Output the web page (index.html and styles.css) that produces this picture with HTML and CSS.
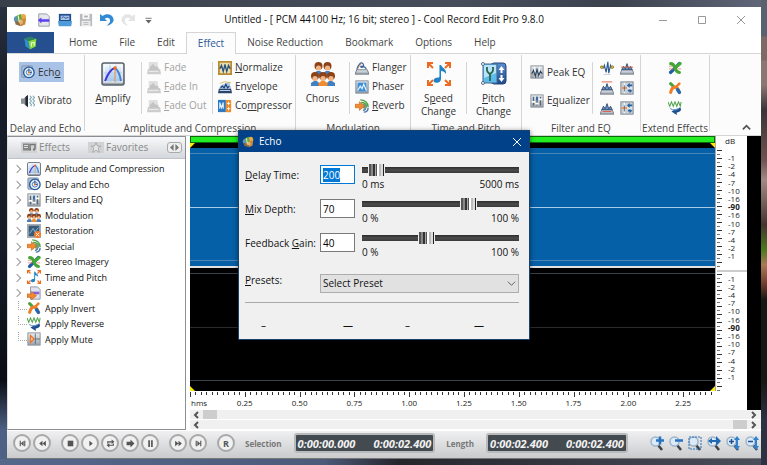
FILE: index.html
```html
<!DOCTYPE html>
<html lang="en">
<head>
<meta charset="utf-8">
<title>Untitled - Cool Record Edit Pro 9.8.0</title>
<link rel="stylesheet" href="styles.css">
</head>
<body>
<svg class="defs" aria-hidden="true">
  <defs>
    <linearGradient id="steel" x1="0" y1="0" x2="0" y2="1"><stop offset="0" stop-color="#e9edf2"/><stop offset="1" stop-color="#9aa3ad"/></linearGradient>
    <linearGradient id="sky" x1="0" y1="0" x2="0" y2="1"><stop offset="0" stop-color="#eef7ff"/><stop offset="1" stop-color="#9cc4ea"/></linearGradient>
    <linearGradient id="navy" x1="0" y1="0" x2="0" y2="1"><stop offset="0" stop-color="#5b8fd0"/><stop offset="1" stop-color="#1d4788"/></linearGradient>

    <symbol id="i-app" viewBox="0 0 16 16"><circle cx="11.500" cy="4.500" r="3.500" fill="#e9a944"/><circle cx="4.500" cy="7" r="3.500" fill="#5f93bd"/><path d="M4 3l5-2 2 10-5 1z" fill="#5ea845"/><path d="M9 7l6-1-1 7-5 2z" fill="#c9873b"/><path d="M2 9l6 1 1 5-6-2z" fill="#8c6b46"/><circle cx="9" cy="10" r="2.500" fill="#e2b477"/><path d="M6 3l1 7" stroke="#e6f2b8" stroke-width="1.300"/></symbol>
    <symbol id="i-cube" viewBox="0 0 20 20"><path d="M2 4l8-3 9 3-1 11-8 4-6-4z" fill="#3f9d38"/><path d="M2 4l6 3 2 12-6-4z" fill="#2b8fd0"/><path d="M8 7l11-3-1 11-8 4z" fill="#86d83c"/><path d="M2 4l8-3 9 3-11 3z" fill="#2d7f6a"/><path d="M12 15v-5l4-1v5" fill="none" stroke="#f5ffd8" stroke-width="1.500"/></symbol>
    <symbol id="i-new" viewBox="0 0 16 16"><path d="M2 1h9l3 3v11H2z" fill="#e4e7eb" stroke="#8f969e"/><path d="M1 8l4-3v2h9v3H5v2z" fill="#5b3ff0"/></symbol>
    <symbol id="i-open" viewBox="0 0 16 16"><path d="M1 1h14v13H1z" fill="#1f4f8e"/><path d="M3 3h10v5H3z" fill="#a9c3df"/><path d="M4 6l2-2 2 2 4-1" stroke="#2452b5" fill="none"/><path d="M0 9h16l-1 6H1z" fill="#4f9bd9"/></symbol>
    <symbol id="i-save" viewBox="0 0 16 16"><path d="M1 1h14v14H1z" fill="#b9bcbf"/><path d="M4 1h8v6H4z" fill="#f7f7f7"/><path d="M3 9h10v6H3z" fill="#ededed"/><path d="M5 11h6M5 13h6" stroke="#b0b3b6"/><path d="M6 4h4" stroke="#aaa" stroke-width="2"/></symbol>
    <symbol id="i-undo" viewBox="0 0 16 16"><path d="M0 1v8h8L5.500 6.500C8 4.500 12 5.500 11.500 9.500c-.5 2-2 3.500-4 5C12 14 16 10.500 15.500 7 14.500 1 7 0 3 3.500z" fill="#3289d6"/></symbol>
    <symbol id="i-redo" viewBox="0 0 16 16"><path d="M16 1v8H8l2.500-2.500C8 4.500 4 5.500 4.500 9.500c.5 2 2 3.500 4 5C4 14 0 10.500.5 7 1.500 1 9 0 13 3.500z" fill="#e3e5e7"/></symbol>
    <symbol id="i-echo" viewBox="0 0 16 16"><rect x="1" y="1" width="12" height="13" rx="1" fill="#aebfd3" stroke="#7b8ea6"/><circle cx="9" cy="8.500" r="6" fill="#e7f0fa" stroke="#24579b" stroke-width="1.500"/><circle cx="9" cy="8.500" r="3" fill="none" stroke="#3e78c0"/><path d="M9 8.500V4M9 8.500h3" stroke="#16386f"/><circle cx="9" cy="8.500" r="1.200" fill="#ed7b2b"/></symbol>
    <symbol id="i-vibrato" viewBox="0 0 16 16"><path d="M0 5h3l5-4v14l-5-4H0z" fill="#8b9198"/><path d="M5 3.500L8 1v14l-3-2.500z" fill="#24282d"/><path d="M10 2l2 2-2 2 2 2-2 2 2 2-1 2M13.500 2l2 2-2 2 2 2-2 2 2 2-1 2" fill="none" stroke="#76a4b3" stroke-width="1.200"/></symbol>
    <symbol id="i-amplify" viewBox="0 0 24 24"><rect x="1" y="1" width="22" height="22" rx="2" fill="url(#steel)" stroke="#59626c" stroke-width="1.500"/><rect x="3" y="3" width="18" height="17" fill="url(#sky)" stroke="#fff"/><path d="M3 11h18M9 3v17M15 3v17" stroke="#b3cde8"/><path d="M4 19C6 14 9 7 14 6" fill="none" stroke="#4330d8" stroke-width="2"/><path d="M14 6c3 2 5 7 6 13" fill="none" stroke="#477fd0" stroke-width="2"/><path d="M14 5v15" stroke="#e79042"/><circle cx="14" cy="6" r="1.700" fill="#f26a1b"/></symbol>
    <symbol id="i-fade" viewBox="0 0 16 16"><path d="M2 1h10l1 8H2z" fill="#e0e0e0"/><path d="M1 9h14l1 6H0z" fill="#cdcdcd"/><path d="M3 7l4-4 2 3 4 1v3H3z" fill="#c4c4c4"/><path d="M2 12h11" stroke="#eee"/></symbol>
    <symbol id="i-normalize" viewBox="0 0 16 16"><path d="M1 1h14v14H1z" fill="#e9ddb5" stroke="#b98d2b" stroke-width="2"/><path d="M2 9l2-4 2 7 2-8 2 8 2-7 2 4" fill="none" stroke="#2d5479" stroke-width="1.500"/></symbol>
    <symbol id="i-envelope" viewBox="0 0 16 16"><path d="M3 6L13 2l2 8H1z" fill="#a9c4e4"/><path d="M1 10h14l1 5H0z" fill="#26456d"/><path d="M3 9l2-2 2 2 2-4 2 4 2-2" fill="none" stroke="#173a78" stroke-width="1.300"/><path d="M2 4l5-2 8 1" stroke="#d9b34e" fill="none"/><path d="M2 12h12" stroke="#dbe5ef"/></symbol>
    <symbol id="i-compress" viewBox="0 0 16 16"><path d="M0 1h9v14H0z" fill="#2d79c3"/><path d="M2 11V4l2 6 2-6v7" fill="none" stroke="#e3f1fc" stroke-width="1.300"/><rect x="9" y="1" width="6" height="14" rx="1" fill="#f08a24"/><path d="M12 3v4M12 9v4M10 5h4M10 11h4" stroke="#fff"/></symbol>
    <symbol id="i-people" viewBox="0 0 24 24"><path d="M3 13v-2l3-2h3l3 2 3-2h3l3 2v2z" fill="#417fc3"/><g fill="#8e4218"><circle cx="7.500" cy="4" r="4"/><circle cx="16.500" cy="4" r="4"/></g><g fill="#f0b588"><circle cx="7.500" cy="6" r="2.600"/><circle cx="16.500" cy="6" r="2.600"/></g><path d="M0 24v-3l3-2h3l2 2v3zM16 24v-3l2-2h3l3 2v3z" fill="#417fc3"/><path d="M7.500 24v-3l3-2h3l3 2v3z" fill="#f08d2e"/><g fill="#8e4218"><circle cx="4" cy="14" r="4"/><circle cx="12" cy="14" r="4"/><circle cx="20" cy="14" r="4"/></g><g fill="#f0b588"><circle cx="4" cy="16.500" r="2.600"/><circle cx="12" cy="16.500" r="2.600"/><circle cx="20" cy="16.500" r="2.600"/></g></symbol>
    <symbol id="i-flanger" viewBox="0 0 16 16"><path d="M2 10C4 3 7 1 9 3s0 5-2 4 3-3 6 2" fill="none" stroke="#3e6799" stroke-width="1.400"/><path d="M0 15l2-5h12l2 5z" fill="url(#steel)" stroke="#69737e"/><path d="M3 9l4-6" stroke="#df8b56"/></symbol>
    <symbol id="i-phaser" viewBox="0 0 16 16"><rect x="1" y="1" width="14" height="14" fill="url(#steel)" stroke="#77818b"/><path d="M3 3h10v10H3z" fill="#3d8ed8"/><path d="M3 12l3-5 2 3 2-5 3 7" fill="none" stroke="#e4f4ff" stroke-width="1.400"/></symbol>
    <symbol id="i-reverb" viewBox="0 0 16 16"><g fill="none" stroke-width="1.600"><path d="M6 1c5 0 9 3 9 8M7 4c4 0 6 2 6 5" stroke="#4fa33d"/><path d="M15 10c0 3-2 5-5 5M12 10c0 2-1 3-3 3" stroke="#4e77a8"/></g><circle cx="11" cy="8" r="3" fill="#6fa07d"/><path d="M0 6h5V3l6 5-6 5v-3H0z" fill="#f38a2e" stroke="#bd5e12" stroke-width=".6"/></symbol>
    <symbol id="i-note" viewBox="0 0 24 24"><path d="M1 6V1h5M2 2l4 4M18 1h5v5M22 2l-4 4M1 18v5h5M2 22l4-4M18 23h5v-5M22 22l-4-4" fill="none" stroke="#ee6a1e" stroke-width="2"/><path d="M12 3h2c1 3 6 4 5 9-1-2-3-3-5-3v8c0 3-3 4.500-6 3.500-3-1.500-1-5.500 4-5z" fill="#2382c5"/><path d="M12.500 3v12" stroke="#75bfe9"/></symbol>
    <symbol id="i-pitch" viewBox="0 0 26 24"><rect x="10" y="1" width="15" height="21" rx="3" fill="url(#navy)" stroke="#23477b"/><path d="M2 2h14v19H2z" fill="#5bbcec" stroke="#46688e"/><path d="M3 3h12v8L3 16z" fill="#b8e3f8"/><path d="M6 5v3c0 3 3 3 3 5v6M12 5v3c0 3-3 3-3 5" fill="none" stroke="#28664b" stroke-width="1.800"/><path d="M20.500 4l3 4h-2v3h-2V8h-2zM20.500 20l3-4h-2v-3h-2v3h-2z" fill="#fff"/><g fill="#fff" stroke="#526a85"><circle cx="2" cy="2" r="1.500"/><circle cx="2" cy="21" r="1.500"/></g></symbol>
    <symbol id="i-peak" viewBox="0 0 16 16"><rect x="1" y="1" width="14" height="14" fill="url(#steel)" stroke="#858d95"/><path d="M2 7h12M5 2v12M11 2v12" stroke="#fff"/><path d="M2 10l2-4 2 7 2-8 2 7 2-5 2 3" fill="none" stroke="#28425f" stroke-width="1.300"/><path d="M2 11h3" stroke="#df8843"/></symbol>
    <symbol id="i-eq" viewBox="0 0 16 16"><rect x="1" y="1" width="14" height="14" fill="url(#steel)" stroke="#858d95"/><path d="M4 3v10M8 3v10M12 3v10" stroke="#58646f" stroke-width="1.500"/><path d="M2 9h4M6 11h4M10 6h4" stroke="#fff" stroke-width="2"/><path d="M8 3v4" stroke="#2c68b0" stroke-width="2"/></symbol>
    <symbol id="i-wave" viewBox="0 0 16 16"><path d="M3 8h1l1-3 2 8 2-12 1 13 2-9 1 3" fill="none" stroke="#2b5992" stroke-width="1.300"/><circle cx="2" cy="7" r="1.500" fill="#e6bc3f" stroke="#8f7623"/><circle cx="14" cy="7" r="1.500" fill="#e6bc3f" stroke="#8f7623"/><path d="M4 15.500h8" stroke="#bdc7d0"/></symbol>
    <symbol id="i-pass" viewBox="0 0 16 16"><path d="M2 10h12l2 5H0z" fill="url(#steel)" stroke="#737c86"/><path d="M2 10l2-4 2 3 2-6 2 6 2-3 2 4z" fill="#7194c0" stroke="#24446f"/></symbol>
    <symbol id="i-mix" viewBox="0 0 16 16"><rect x="1" y="1" width="14" height="14" fill="#cbd0d6" stroke="#737b85"/><path d="M2 8h12M5 2v12" stroke="#fff"/><path d="M2 8h6" stroke="#e68c52" stroke-width="2"/><path d="M5 5v7" stroke="#546575"/><path d="M8 5l3-3v2h3v2h-3v2zM14 11l-3-2v1H9v2h2v2z" fill="#2563a7"/></symbol>
    <symbol id="i-stereo" viewBox="0 0 16 16"><path d="M3 13L13 3" stroke="#235ca5" stroke-width="4" stroke-linecap="round"/><path d="M3 3c3 0 4 2 5 5s2 5 5 5" fill="none" stroke="#43a634" stroke-width="3.500" stroke-linecap="round"/><path d="M10 6l4-3" stroke="#49ab38" stroke-width="3.500" stroke-linecap="round"/><path d="M1 6h4M11 9h4M1 9h5" stroke="#ef9277"/></symbol>
    <symbol id="i-invert" viewBox="0 0 16 16"><path d="M3 3c1 1 2 2 3 3" stroke="#49a13a" stroke-width="3.500" stroke-linecap="round"/><path d="M3 13c1-4 3-6 5-6 3 0 4 3 5 6" fill="none" stroke="#ef7e27" stroke-width="3.500" stroke-linecap="round"/><path d="M9 7l4-4" stroke="#ef7e27" stroke-width="3" stroke-linecap="round"/><path d="M11 10l2 3" stroke="#286ab0" stroke-width="4" stroke-linecap="round"/></symbol>
    <symbol id="i-reverse" viewBox="0 0 16 16"><path d="M0 1l2 5 2-5 2 5 2-5 2 5 2-5 2 5 1-5" fill="none" stroke="#55a550" stroke-width="1.200"/><path d="M2 8c4 2 7 2 12-1l1 3c-1 2-3 3-5 3v3l-6-4 3-2c-2 0-4 0-5-2z" fill="#1e508f"/><path d="M3 9c4 2 7 1 10-1" stroke="#86b6e3" fill="none"/></symbol>
    <symbol id="i-restore" viewBox="0 0 16 16"><rect x="1" y="1" width="14" height="14" fill="#395b79" stroke="#a5adb5" stroke-width="2"/><path d="M3 11l4-6 2 4 4-5" stroke="#8dc4e8" fill="none"/><circle cx="12" cy="12" r="4" fill="#f37a26"/><path d="M10 10l4 4M14 10l-4 4" stroke="#fff"/></symbol>
    <symbol id="i-generate" viewBox="0 0 16 16"><path d="M4 1h8l3 3v11H4z" fill="#dfe3ee" stroke="#8990a0"/><path d="M6 8h8" stroke="#8a61da" stroke-width="3"/><path d="M0 9h5V6l6 5-6 5v-3H0z" fill="#f38a2e" stroke="#b75d18" stroke-width=".6"/></symbol>
    <symbol id="i-mute" viewBox="0 0 16 16"><rect x="1" y="1" width="14" height="14" fill="url(#steel)" stroke="#858d95"/><path d="M4 4l4 4-4 4z" fill="#f8d2b8" stroke="#ee7428" stroke-width="1.500"/><path d="M9.500 2v12M9 8h6" stroke="#5e6872"/></symbol>
    <symbol id="i-tabfx" viewBox="0 0 16 10"><path d="M2 1h6v7H2z" fill="#858585"/><path d="M3 3h4M3 5h4" stroke="#ddd"/><path d="M9 7V2h5v5" stroke="#777" stroke-width="1.500" fill="none"/><path d="M8 7h2M12 7h2" stroke="#777" stroke-width="2"/></symbol>
    <symbol id="i-star" viewBox="0 0 16 16"><path d="M8 1l2 5h5l-4 3 2 6-5-3-5 3 2-6-4-3h5z" fill="#e7e7e7" stroke="#999"/></symbol>

    <symbol id="g-first" viewBox="0 0 16 16"><path d="M3 3h2v10H3zM10 3v10L5 8zM11 3h2v10h-2z"/></symbol>
    <symbol id="g-rew" viewBox="0 0 16 16"><path d="M8 3v10L2 8zM14 3v10L8 8z"/></symbol>
    <symbol id="g-stop" viewBox="0 0 16 16"><path d="M3 3h10v10H3z"/></symbol>
    <symbol id="g-play" viewBox="0 0 16 16"><path d="M6 3v10l6-5z"/></symbol>
    <symbol id="g-loop" viewBox="0 0 16 16"><path d="M2 8V4h8V1l5 4-5 4V6H4v2zM14 8v4H6v3l-5-4 5-4v3h6V8z"/></symbol>
    <symbol id="g-next" viewBox="0 0 16 16"><path d="M1 5h7V1l7 7-7 7v-4H1z"/></symbol>
    <symbol id="g-pause" viewBox="0 0 16 16"><path d="M4 2h3v12H4zM9 2h3v12H9z"/></symbol>
    <symbol id="g-fwd" viewBox="0 0 16 16"><path d="M2 3v10l6-5zM8 3v10l6-5z"/></symbol>
    <symbol id="g-last" viewBox="0 0 16 16"><path d="M3 3h2v10H3zM6 3v10l5-5zM11 3h2v10h-2z"/></symbol>

    <symbol id="z-lens" viewBox="0 0 16 16"><path d="M9 10l4 5" stroke="#3e4247" stroke-width="2.500"/><circle cx="6.500" cy="6.500" r="4.500" fill="#dcebf7" stroke="#9db4c9" stroke-width="1.500"/></symbol>
    <symbol id="z-in" viewBox="0 0 16 16"><use href="#z-lens"/><path d="M7 5.500h8M11 1.500v8" stroke="#2673c1" stroke-width="2.500"/></symbol>
    <symbol id="z-out" viewBox="0 0 16 16"><use href="#z-lens"/><path d="M7 5.500h8" stroke="#2673c1" stroke-width="2.500"/></symbol>
    <symbol id="z-sel" viewBox="0 0 16 16"><use href="#z-lens"/><path d="M2 2h12v12H2z" fill="none" stroke="#2e6fb5" stroke-dasharray="2 1"/></symbol>
    <symbol id="z-fit" viewBox="0 0 16 16"><use href="#z-lens"/><path d="M2 6l4-3v2h4V1l5 5-5 5V7H6v2z" fill="#2168b3"/></symbol>
    <symbol id="z-vin" viewBox="0 0 16 16"><use href="#z-lens"/><path d="M4 6.500h5M6.500 4v5" stroke="#1c4f93" stroke-width="1.500"/><path d="M12 1l3 4h-2v6h2l-3 4-3-4h2V5H9z" fill="#2d82d0"/></symbol>
    <symbol id="z-vout" viewBox="0 0 16 16"><use href="#z-lens"/><path d="M4 6.500h5" stroke="#1c4f93" stroke-width="1.500"/><path d="M12 1l3 4h-2v6h2l-3 4-3-4h2V5H9z" fill="#2d82d0"/></symbol>
  </defs>
</svg>

<div class="window">
  <header class="titlebar">
    <div class="quick">
      <svg><use href="#i-app"/></svg>
      <button aria-label="New"><svg><use href="#i-new"/></svg></button>
      <button aria-label="Open"><svg><use href="#i-open"/></svg></button>
      <button aria-label="Save"><svg><use href="#i-save"/></svg></button>
      <button aria-label="Undo"><svg><use href="#i-undo"/></svg></button>
      <button aria-label="Redo"><svg><use href="#i-redo"/></svg></button>
      <button aria-label="Customize"><svg viewBox="0 0 16 16"><path d="M4 6h7" stroke="#666"/><path d="M4 8h7l-3.500 4z" fill="#666"/></svg></button>
    </div>
    <h1>Untitled - [ PCM 44100 Hz; 16 bit; stereo ] - Cool Record Edit Pro 9.8.0</h1>
    <div class="syscmds">
      <button aria-label="Minimize"><svg viewBox="0 0 10 10"><path d="M1 5.500h8"/></svg></button>
      <button aria-label="Maximize"><svg viewBox="0 0 10 10"><path d="M1.500 1.500h7v7h-7z"/></svg></button>
      <button aria-label="Close"><svg viewBox="0 0 10 10"><path d="M1 1l8 8M9 1L1 9"/></svg></button>
    </div>
  </header>

  <nav class="tabs">
    <button class="tab tab-app" aria-label="Application menu"><svg><use href="#i-cube"/></svg></button>
    <button class="tab">Home</button>
    <button class="tab">File</button>
    <button class="tab">Edit</button>
    <button class="tab tab-active">Effect</button>
    <button class="tab">Noise Reduction</button>
    <button class="tab">Bookmark</button>
    <button class="tab">Options</button>
    <button class="tab">Help</button>
  </nav>

  <section class="ribbon">
    <div class="group group-delay">
      <div class="tools">
        <div class="stack stack-two">
          <button class="cmd cmd-on"><svg><use href="#i-echo"/></svg><span>Ech<u>o</u></span></button>
          <button class="cmd"><svg><use href="#i-vibrato"/></svg><span>Vibrato</span></button>
        </div>
      </div>
      <h2>Delay and Echo</h2>
    </div>
    <div class="group group-amp">
      <div class="tools">
        <button class="big"><svg><use href="#i-amplify"/></svg><span><u>A</u>mplify</span></button>
        <div class="stack ruled off">
          <button class="cmd" disabled><svg><use href="#i-fade"/></svg><span>Fade</span></button>
          <button class="cmd" disabled><svg><use href="#i-fade"/></svg><span><u>F</u>ade In</span></button>
          <button class="cmd" disabled><svg><use href="#i-fade"/></svg><span><u>F</u>ade Out</span></button>
        </div>
        <div class="stack ruled">
          <button class="cmd"><svg><use href="#i-normalize"/></svg><span><u>N</u>ormalize</span></button>
          <button class="cmd"><svg><use href="#i-envelope"/></svg><span>En<u>v</u>elope</span></button>
          <button class="cmd"><svg><use href="#i-compress"/></svg><span>Co<u>m</u>pressor</span></button>
        </div>
      </div>
      <h2>Amplitude and Compression</h2>
    </div>
    <div class="group group-mod">
      <div class="tools">
        <button class="big"><svg><use href="#i-people"/></svg><span>Chorus</span></button>
        <div class="stack ruled">
          <button class="cmd"><svg><use href="#i-flanger"/></svg><span>Flanger</span></button>
          <button class="cmd"><svg><use href="#i-phaser"/></svg><span>Phaser</span></button>
          <button class="cmd"><svg><use href="#i-reverb"/></svg><span><u>R</u>everb</span></button>
        </div>
      </div>
      <h2>Modulation</h2>
    </div>
    <div class="group group-time">
      <div class="tools">
        <button class="big"><svg><use href="#i-note"/></svg><span>S<u>p</u>eed<br>Change</span></button>
        <button class="big ruled"><svg><use href="#i-pitch"/></svg><span><u>P</u>itch<br>Change</span></button>
      </div>
      <h2>Time and Pitch</h2>
    </div>
    <div class="group group-filter">
      <div class="tools">
        <div class="stack stack-two">
          <button class="cmd"><svg><use href="#i-peak"/></svg><span>Peak EQ</span></button>
          <button class="cmd"><svg><use href="#i-eq"/></svg><span>E<u>q</u>ualizer</span></button>
        </div>
        <div class="icons ruled">
          <button aria-label="Band pass"><svg><use href="#i-wave"/></svg></button>
          <button aria-label="High shelf"><svg viewBox="0 0 16 16"><use href="#i-pass"/><path d="M1 7h14" stroke="#e05a3c"/></svg></button>
          <button aria-label="High pass"><svg viewBox="0 0 16 16"><use href="#i-pass"/><path d="M2 1h12" stroke="#e05a3c"/></svg></button>
          <button aria-label="Low shelf"><svg><use href="#i-mix"/></svg></button>
          <button aria-label="Low pass"><svg viewBox="0 0 16 16"><use href="#i-pass"/><path d="M3 12h10" stroke="#e05a3c"/></svg></button>
          <button aria-label="Notch"><svg><use href="#i-mix"/></svg></button>
        </div>
      </div>
      <h2>Filter and EQ</h2>
    </div>
    <div class="group group-extend">
      <div class="tools">
        <div class="icons icons-one">
          <button aria-label="Stereo imagery"><svg><use href="#i-stereo"/></svg></button>
          <button aria-label="Invert"><svg><use href="#i-invert"/></svg></button>
          <button aria-label="Reverse"><svg><use href="#i-reverse"/></svg></button>
        </div>
      </div>
      <h2>Extend Effects</h2>
    </div>
    <button class="collapse" aria-label="Collapse ribbon"><svg viewBox="0 0 10 10"><path d="M1 7l4-4 4 4"/></svg></button>
  </section>

  <main class="work">
    <aside class="panel">
      <div class="panel-tabs">
        <button><svg><use href="#i-tabfx"/></svg>Effects</button>
        <button><svg><use href="#i-star"/></svg>Favorites</button>
        <button class="pager" aria-label="Scroll tabs"><svg viewBox="0 0 14 10"><path d="M6 1v8L2 5zM8 1v8l4-4z"/></svg></button>
      </div>
      <ul class="tree">
        <li class="branch"><svg><use href="#i-amplify"/></svg>Amplitude and Compression</li>
        <li class="branch"><svg><use href="#i-echo"/></svg>Delay and Echo</li>
        <li class="branch"><svg><use href="#i-eq"/></svg>Filters and EQ</li>
        <li class="branch"><svg><use href="#i-people"/></svg>Modulation</li>
        <li class="branch"><svg><use href="#i-restore"/></svg>Restoration</li>
        <li class="branch"><svg><use href="#i-reverb"/></svg>Special</li>
        <li class="branch"><svg><use href="#i-stereo"/></svg>Stereo Imagery</li>
        <li class="branch"><svg><use href="#i-note"/></svg>Time and Pitch</li>
        <li class="branch"><svg><use href="#i-generate"/></svg>Generate</li>
        <li><svg><use href="#i-invert"/></svg>Apply Invert</li>
        <li><svg><use href="#i-reverse"/></svg>Apply Reverse</li>
        <li><svg><use href="#i-mute"/></svg>Apply Mute</li>
      </ul>
    </aside>

    <section class="editor">
      <div class="stage">
        <div class="waves">
          <div class="overview"></div>
          <div class="marks marks-top"><i></i><i></i></div>
          <div class="channel channel-left"><hr><hr><hr></div>
          <div class="channel channel-right"><hr><hr><hr></div>
          <div class="marks marks-bottom"><i></i><i></i></div>
        </div>
        <div class="scale">
          <span class="unit">dB</span>
          <div class="levels"><span>-1</span><span>-2</span><span>-4</span><span>-7</span><span>-10</span><span>-16</span><b>-90</b><span>-16</span><span>-10</span><span>-7</span><span>-4</span><span>-2</span><span>-1</span></div>
          <div class="levels"><span>-1</span><span>-2</span><span>-4</span><span>-7</span><span>-10</span><span>-16</span><b>-90</b><span>-16</span><span>-10</span><span>-7</span><span>-4</span><span>-2</span><span>-1</span></div>
        </div>
        <div class="ruler">
          <span class="hms">hms</span><span>0.25</span><span>0.50</span><span>0.75</span><span>1.00</span><span>1.25</span><span>1.50</span><span>1.75</span><span>2.00</span><span>2.25</span>
        </div>
        <div class="meter"></div>
      </div>
      <div class="scroll">
        <svg viewBox="0 0 8 8"><path d="M6 1L3 4l3 3"/></svg><i></i><svg class="end" viewBox="0 0 8 8"><path d="M2 1l3 3-3 3"/></svg>
      </div>
      <div class="scroll">
        <svg viewBox="0 0 8 8"><path d="M6 1L3 4l3 3"/></svg><i class="end"></i><svg viewBox="0 0 8 8"><path d="M2 1l3 3-3 3"/></svg>
      </div>
    </section>
  </main>

  <footer class="transport">
    <div class="keys">
      <button aria-label="Go to start"><svg><use href="#g-first"/></svg></button>
      <button aria-label="Rewind"><svg><use href="#g-rew"/></svg></button>
    </div>
    <div class="keys">
      <button aria-label="Stop"><svg><use href="#g-stop"/></svg></button>
      <button aria-label="Play"><svg><use href="#g-play"/></svg></button>
      <button aria-label="Loop"><svg><use href="#g-loop"/></svg></button>
      <button aria-label="Play to end"><svg><use href="#g-next"/></svg></button>
      <button aria-label="Pause"><svg><use href="#g-pause"/></svg></button>
    </div>
    <div class="keys">
      <button aria-label="Fast forward"><svg><use href="#g-fwd"/></svg></button>
      <button aria-label="Go to end"><svg><use href="#g-last"/></svg></button>
    </div>
    <div class="keys"><button aria-label="Record">R</button></div>
    <div class="readout"><span>Selection</span><output><em>0:00:00.000</em><em>0:00:02.400</em></output></div>
    <div class="readout"><span>Length</span><output><em>0:00:02.400</em><em>0:00:02.400</em></output></div>
    <div class="zooms">
      <button aria-label="Zoom in"><svg><use href="#z-in"/></svg></button>
      <button aria-label="Zoom out"><svg><use href="#z-out"/></svg></button>
      <button aria-label="Zoom to selection"><svg><use href="#z-sel"/></svg></button>
      <button aria-label="Zoom full"><svg><use href="#z-fit"/></svg></button>
      <button aria-label="Zoom in vertically"><svg><use href="#z-vin"/></svg></button>
      <button aria-label="Zoom out vertically"><svg><use href="#z-vout"/></svg></button>
    </div>
  </footer>

  <form class="dialog" role="dialog" aria-labelledby="dlg-title">
    <header>
      <svg><use href="#i-app"/></svg>
      <h2 id="dlg-title">Echo</h2>
      <button type="button" aria-label="Close dialog"><svg viewBox="0 0 10 10"><path d="M1 1l8 8M9 1L1 9"/></svg></button>
    </header>
    <div class="fields">
      <div class="field">
        <label for="delay"><u>D</u>elay Time:</label>
        <input id="delay" type="text" value="200">
        <div class="slide">
          <input type="range" min="0" max="5000" value="200" aria-label="Delay time">
          <span>0 ms</span><span>5000 ms</span>
        </div>
      </div>
      <div class="field">
        <label for="mix"><u>M</u>ix Depth:</label>
        <input id="mix" type="text" value="70">
        <div class="slide">
          <input type="range" min="0" max="100" value="70" aria-label="Mix depth">
          <span>0 %</span><span>100 %</span>
        </div>
      </div>
      <div class="field">
        <label for="gain">Feedback <u>G</u>ain:</label>
        <input id="gain" type="text" value="40">
        <div class="slide">
          <input type="range" min="0" max="100" value="40" aria-label="Feedback gain">
          <span>0 %</span><span>100 %</span>
        </div>
      </div>
      <div class="field field-preset">
        <label for="preset"><u>P</u>resets:</label>
        <div class="picker">
          <select id="preset"><option>Select Preset</option></select>
          <svg viewBox="0 0 10 10"><path d="M1 3l4 4 4-4"/></svg>
        </div>
      </div>
    </div>
    <div class="actions"><span>–</span><span>—</span><span>–</span><span>—</span></div>
  </form>
</div>
<script src="app.js"></script>
</body>
</html>
```
FILE: styles.css
```css
* { box-sizing: border-box; }

body {
  margin: 0;
  min-height: 100vh;
  padding: 7px 6px 6px 7px;
  font: 10px/13px "Open Sans", "Noto Sans", sans-serif;
  color: #222;
  background:
    linear-gradient(#5a6270 0 36px, #7d6a66 37px 60px, #8a7672 61px 85px, #3a3438 110px, #6e5350 160px, #a08b84 180px, #44352f 225px, #4c7a1d 250px, #a87a57 265px, #6b3a2c 285px, #141714 300px 380px, #2c3242 420px) right / 6px 100% no-repeat,
    linear-gradient(90deg, #394049, #484d5c 60%, #3c414e 80%, #62677a) top / 100% 7px no-repeat,
    linear-gradient(90deg, #54688c, #4d5b7a 42%, #25262c 52%, #4b4f5c) bottom / 100% 6px no-repeat,
    linear-gradient(#2c3340, #161c28 90px 250px, #0a0d14 380px, #4d6184 430px);
}

button {
  border: 0;
  padding: 0;
  background: none;
  font: inherit;
  color: inherit;
}

h1, h2, ul, hr { margin: 0; padding: 0; border: 0; font: inherit; }
svg { display: block; width: 14px; height: 14px; flex: none; }
u { text-underline-offset: 1px; }
.defs { position: absolute; width: 0; height: 0; }

.window {
  position: relative;
  display: flex;
  flex-direction: column;
  min-height: calc(100vh - 13px);
  background: #fff;
}

/* Title bar */
.titlebar {
  display: grid;
  grid-template-columns: 1fr auto 1fr;
  align-items: center;
  height: 25px;
}
.titlebar h1 { color: #111; white-space: nowrap; }
.quick { display: flex; gap: 7px; padding-left: 6px; }
.quick > svg { margin-right: 3px; }
.syscmds { display: flex; justify-content: flex-end; gap: 29px; padding-right: 15px; }
.syscmds svg { width: 10px; height: 10px; fill: none; stroke: #999; }

/* Ribbon tabs */
.tabs { display: flex; height: 22px; border-bottom: 1px solid #d5d5d5; }
.tab { padding: 0 11px; color: #444; white-space: nowrap; }
.tab-app { width: 47px; margin-right: 4px; padding: 0 16px; background: #254f8f; }
.tab-active {
  margin-bottom: -1px;
  border: 1px solid #d5d5d5;
  border-bottom: 0;
  background: #fcfcfc;
  color: #2b579a;
}

/* Ribbon */
.ribbon {
  display: flex;
  height: 82px;
  padding-top: 1px;
  border-bottom: 1px solid #d5d5d5;
  background: #fcfcfc;
}
.group {
  display: flex;
  flex-direction: column;
  height: 76px;
  border-right: 1px solid #d5d5d5;
}
.group h2 { margin-top: auto; margin-bottom: -4px; text-align: center; white-space: nowrap; color: #444; }
.group-delay { width: 78px; }
.group-amp { width: 211px; }
.group-mod { width: 115px; }
.group-time { width: 111px; }
.group-filter { width: 119px; }
.group-extend { width: 69px; }
.tools { display: flex; height: 60px; padding-top: 3px; }
.stack { display: flex; flex-direction: column; flex: 1; padding-left: 6px; }
.stack .cmd { flex: 1; }
.stack-two { justify-content: space-around; }
.group-delay .stack { padding-left: 12px; }
.group-filter .stack { flex: none; width: 70px; }
.stack-two .cmd { flex: none; }
.off { flex: none; width: 71px; }
.ruled { position: relative; }
.ruled::before {
  content: "";
  position: absolute;
  left: 0;
  top: 4px;
  bottom: 1px;
  border-left: 1px solid #d5d5d5;
}
.cmd { display: flex; align-items: center; gap: 3px; height: 20px; white-space: nowrap; color: #333; }
.cmd:disabled { color: #a3a3a3; }
.stack-two .cmd { width: 45px; padding-left: 2px; }
.cmd-on { background: #a9c2e8; }
.big {
  display: flex;
  flex-direction: column;
  align-items: center;
  gap: 6px;
  width: 56px;
  padding-top: 4px;
  color: #333;
}
.big svg { width: 26px; height: 24px; }
.group-mod .big { width: 53px; }
.group-time .big { flex: 1; }
.icons {
  display: grid;
  grid-template-columns: 14px 14px;
  grid-auto-rows: 20px;
  gap: 0 6px;
  align-items: center;
  padding-left: 8px;
}
.icons-one { grid-template-columns: 14px; padding: 0; margin: 0 auto; }
.collapse { margin: auto 10px 3px auto; }
.collapse svg { width: 9px; height: 9px; fill: none; stroke: #555; stroke-width: 2; }

/* Work area */
.work { display: flex; flex: 1; border-bottom: 1px solid #fff; }
.panel {
  width: 179px;
  border: 1px solid #8b8f93;
  border-left-color: #ddd;
  background: #fff;
}
.panel-tabs {
  display: flex;
  align-items: center;
  gap: 18px;
  height: 22px;
  padding: 0 3px 0 13px;
  border-bottom: 1px solid #bfc3c7;
  background: linear-gradient(#f7f8f9, #d4d7db);
  color: #888;
}
.panel-tabs button { display: flex; align-items: center; gap: 2px; }
.panel-tabs svg { width: 16px; height: 11px; background: #d0d2d4; }
.panel-tabs .pager { margin-left: auto; }
.panel-tabs .pager svg { width: 15px; height: 11px; border: 1px solid #aaa; border-radius: 3px; background: #eee; fill: #777; }
.tree {
  display: grid;
  grid-auto-rows: 1fr;
  height: 188px;
  list-style: none;
  padding: 2px 0 0 10px;
  font-size: 9px;
  font-weight: 500;
  color: #111;
}
.tree li {
  position: relative;
  display: flex;
  align-items: center;
  gap: 4px;
  padding-left: 9px;
  white-space: nowrap;
}
.tree li::before {
  content: "";
  position: absolute;
  left: 0;
  top: 0;
  width: 8px;
  height: 8px;
  border: dotted #aaa;
  border-width: 0 0 1px 1px;
}
.tree .branch::before {
  top: 5px;
  left: -4px;
  width: 5px;
  height: 5px;
  border: solid #999;
  border-width: 1px 1px 0 0;
  transform: rotate(45deg);
}

/* Waveform editor */
.editor { flex: 1; display: flex; flex-direction: column; padding-left: 4px; background: #fff; min-width: 0; }
.stage {
  flex: 1;
  display: grid;
  grid-template-columns: 1fr 31px 14px;
  grid-template-rows: 1fr 19px;
}
.waves { display: flex; flex-direction: column; border-right: 1px solid #aaa; background: #000; }
.overview { height: 7px; border: 1px solid #0a6a0a; background: #22ee22; }
.marks { display: flex; justify-content: space-between; height: 5px; }
.marks i { width: 5px; height: 5px; background: #ffec00; clip-path: polygon(0 0, 100% 0, 0 100%); }
.marks i + i { clip-path: polygon(0 0, 100% 0, 100% 100%); }
.marks-bottom i { clip-path: polygon(0 0, 100% 100%, 0 100%); }
.marks-bottom i + i { clip-path: polygon(100% 0, 100% 100%, 0 100%); }
.channel {
  flex: 1;
  display: flex;
  flex-direction: column;
  justify-content: space-between;
  padding: 5px 0;
}
.channel hr { height: 1px; background: #39424d; }
.channel hr:nth-child(2) { background: #2a2a2a; }
.channel-left { background: #0560a8; border-bottom: 2px solid #e2e2e2; }
.channel-left hr { background: #4a86b5; }
.channel-left hr:nth-child(2) { background: #a6cbe6; }
.scale {
  display: flex;
  flex-direction: column;
  padding-left: 1px;
  font-size: 8px;
  line-height: 8px;
}
.unit { height: 12px; padding: 1px 0 0 8px; }
.levels {
  flex: 1;
  display: flex;
  flex-direction: column;
  justify-content: space-between;
  padding: 6px 0 9px 11px;
  background:
    repeating-linear-gradient(#333 0 1px, transparent 1px 8px) 0 2px / 5px 100% no-repeat,
    repeating-linear-gradient(#777 0 1px, transparent 1px 4px) 0 2px / 3px 100% no-repeat;
}
.levels + .levels { padding: 3px 0 10px 11px; border-top: 2px solid #ccc; }
.levels > * { height: 8px; }
.meter { grid-column: 3; grid-row: 1 / 3; background: #000; }
.ruler {
  grid-column: 1;
  display: grid;
  grid-template-columns: 1fr repeat(9, 2fr) 0.2fr;
  padding-top: 6px;
  font-size: 8px;
  line-height: 12px;
  text-align: center;
  background:
    repeating-linear-gradient(90deg, #333 0 1px, transparent 1px 10.4167%) 0 1px / 100% 5px no-repeat,
    repeating-linear-gradient(90deg, #333 0 1px, transparent 1px 1.04167%) 0 1px / 100% 3px no-repeat;
}
.ruler .hms { text-align: left; padding-left: 1px; }
.scroll { display: flex; align-items: center; gap: 3px; height: 9px; margin-bottom: 1px; padding: 0 3px 0 2px; background: #f0f0f0; }
.scroll svg { width: 8px; height: 8px; fill: none; stroke: #555; stroke-width: 2; }
.scroll i { width: 14px; height: 9px; background: #cdcdcd; }
.scroll .end { margin-left: auto; }

/* Transport bar */
.transport {
  display: flex;
  align-items: center;
  height: 28px;
  padding: 0 1px 3px 6px;
  border-bottom: 1px solid #777;
  background: linear-gradient(#f0f0f1, #c9cbcd);
}
.keys { display: flex; gap: 2px; margin-right: 10px; }
.keys button {
  display: grid;
  place-items: center;
  width: 18px;
  height: 18px;
  border: 2px solid #a8a8a8;
  border-radius: 50%;
  background: #f1f1f1;
  font-size: 9px;
  line-height: 9px;
  font-weight: bold;
  color: #555;
}
.keys svg { width: 9px; height: 9px; fill: #555; }
.readout { display: flex; align-items: center; gap: 12px; margin-right: 11px; font-size: 8px; font-weight: bold; color: #777; }
.readout output {
  display: flex;
  align-items: center;
  gap: 18px;
  height: 20px;
  padding: 0 2px;
  border: 2px solid #b8babc;
  border-radius: 3px;
  background: #444b50;
  color: #f2f2f2;
  font-size: 11px;
}
.zooms { display: flex; gap: 3px; margin-left: auto; }
.zooms svg { width: 16px; height: 16px; }

/* Echo dialog */
.dialog {
  position: absolute;
  left: 231px;
  top: 123px;
  width: 292px;
  border: 1px solid #17406f;
  background: #f0f0f0;
  box-shadow: 0 1px 5px rgba(0, 0, 0, 0.5);
  color: #111;
}
.dialog header {
  display: flex;
  align-items: center;
  gap: 5px;
  height: 21px;
  padding: 0 7px 0 3px;
  background: #00418a;
  color: #fff;
}
.dialog header svg { width: 12px; height: 12px; }
.dialog header button { margin-left: auto; }
.dialog header button svg { width: 10px; height: 10px; stroke: #fff; }
.fields { margin: 0 10px 0 6px; padding-top: 12px; border-bottom: 1px solid #aaa; }
.field {
  display: grid;
  grid-template-columns: 75px 35px 1fr;
  height: 34px;
  align-items: start;
}
.field label { line-height: 22px; white-space: nowrap; }
.field input[type="text"] {
  width: 35px;
  height: 19px;
  margin-top: 1px;
  padding: 0 2px;
  border: 1px solid #7a7a7a;
  background: #fff;
  font: inherit;
  outline: 0;
}
.field input[type="text"]:focus { border-color: #0078d7; }
.field input::selection { background: #0078d7; color: #fff; }
.slide { display: grid; grid-template-columns: 1fr auto; margin-left: 7px; }
.slide input {
  grid-column: 1 / 3;
  appearance: none;
  width: 100%;
  height: 12px;
  margin: 0 0 2px;
  border-radius: 2px;
  background: linear-gradient(#2c2c2c, #4c4c4c, #3a3a3a) center / 100% 6px no-repeat;
}
.slide input::-webkit-slider-thumb {
  appearance: none;
  width: 17px;
  height: 12px;
  background: linear-gradient(90deg, #eee 0 1px, #555 1px 3px, #888 3px 5px, #333 5px 7px, #aaa 7px 8px, #555 8px 9px, #fff 9px 11px, #bbb 11px 13px, #ddd 13px 15px, #222 15px 16px, #eee 16px);
}
.field-preset { grid-template-columns: 75px 1fr; height: 36px; padding-top: 8px; }
.field-preset label { line-height: 13px; }
.picker { display: grid; align-items: center; }
.picker > * { grid-area: 1 / 1; }
.picker select {
  appearance: none;
  width: 100%;
  height: 19px;
  padding: 0 2px;
  border: 1px solid #adadad;
  border-radius: 0;
  background: #e1e1e1;
  color: #111;
  font: inherit;
}
.picker svg { width: 9px; height: 9px; margin-right: 3px; justify-self: end; pointer-events: none; fill: none; stroke: #555; }
.actions {
  display: grid;
  grid-template-columns: 27px 87px 57px 74px;
  justify-items: end;
  height: 36px;
  padding-top: 16px;
  line-height: 13px;
}
```
FILE: app.js
```js
const delay = document.getElementById("delay");
delay.focus();
delay.select();
```
